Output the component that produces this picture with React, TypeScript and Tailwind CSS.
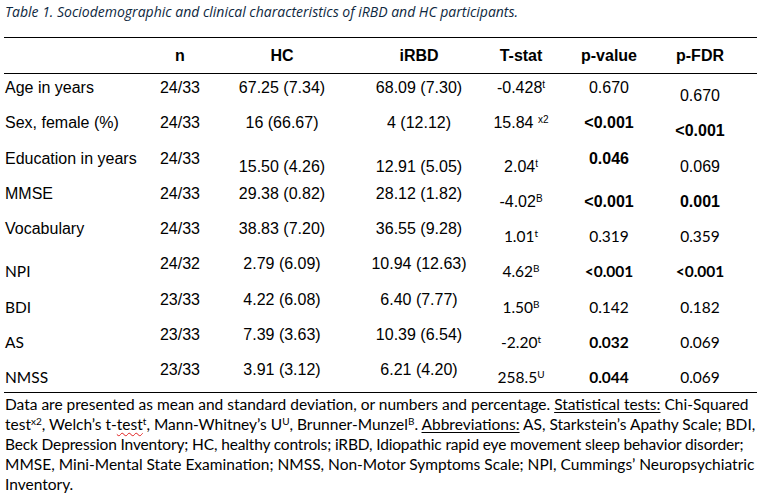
import React from 'react';

type K = 'a' | 'A' | 'c';
type Cell = { t: React.ReactNode; k: K; b?: boolean };

const S = ({ children }: { children: React.ReactNode }) => (
  <sup className="text-[10px]">{children}</sup>
);

const widths = [
  'w-[146px] text-left pl-[1px]',
  'w-[60px] text-center',
  'w-[144px] text-center',
  'w-[130px] text-center',
  'w-[74px] text-center',
  'w-[102px] text-center',
  'w-[80px] text-center',
];

const kc: Record<K, string> = {
  a: "pt-[5px] font-['Liberation_Sans',Arial,sans-serif] text-[16px] leading-[18px]",
  A: "pt-[13px] font-['Liberation_Sans',Arial,sans-serif] text-[16px] leading-[18px]",
  c: "pt-[12px] font-['Lato',sans-serif] text-[15.5px] leading-[18px]",
};

const a = (t: React.ReactNode, b = false): Cell => ({ t, k: 'a', b });
const A = (t: React.ReactNode, b = false): Cell => ({ t, k: 'A', b });
const c = (t: React.ReactNode, b = false): Cell => ({ t, k: 'c', b });

const rows: Cell[][] = [
  [a('Age in years'), a('24/33'), a('67.25 (7.34)'), a('68.09 (7.30)'), a(<>-0.428<S>t</S></>), a('0.670'), A('0.670')],
  [a('Sex, female (%)'), a('24/33'), a('16 (66.67)'), a('4 (12.12)'), a(<>15.84 <S>x2</S></>), a('<0.001', true), A('<0.001', true)],
  [a('Education in years'), a('24/33'), A('15.50 (4.26)'), A('12.91 (5.05)'), A(<>2.04<S>t</S></>), a('0.046', true), A('0.069')],
  [a('MMSE'), a('24/33'), a('29.38 (0.82)'), a('28.12 (1.82)'), A(<>-4.02<S>B</S></>), A('<0.001', true), A('0.001', true)],
  [a('Vocabulary'), a('24/33'), a('38.83 (7.20)'), a('36.55 (9.28)'), c(<>1.01<S>t</S></>), c('0.319'), c('0.359')],
  [c('NPI'), a('24/32'), a('2.79 (6.09)'), a('10.94 (12.63)'), c(<>4.62<S>B</S></>), c('<0.001', true), c('<0.001', true)],
  [c('BDI'), a('23/33'), a('4.22 (6.08)'), a('6.40 (7.77)'), c(<>1.50<S>B</S></>), c('0.142'), c('0.182')],
  [c('AS'), a('23/33'), a('7.39 (3.63)'), a('10.39 (6.54)'), c(<>-2.20<S>t</S></>), c('0.032', true), c('0.069')],
  [c('NMSS'), a('23/33'), a('3.91 (3.12)'), a('6.21 (4.20)'), c(<>258.5<S>U</S></>), c('0.044', true), c('0.069')],
];

const headers = ['', 'n', 'HC', 'iRBD', 'T-stat', 'p-value', 'p-FDR'];

export default function App() {
  return (
    <div className="w-[757px] h-[493px] bg-white text-black overflow-hidden">
      <div className="h-[37px] pl-[5px] pt-[2px] font-['Open_Sans',sans-serif] italic text-[14px] leading-[20px] text-[#0e2841]">
        Table 1. Sociodemographic and clinical characteristics of iRBD and HC participants.
      </div>
      <div className="ml-[4px] w-[753px] border-t border-b border-black">
        <div className="flex h-[36px] border-b border-black items-center font-['Liberation_Sans',Arial,sans-serif] font-bold text-[16px] leading-[18px]">
          {headers.map((h, i) => (
            <div key={i} className={widths[i]}>{h}</div>
          ))}
        </div>
        {rows.map((r, ri) => (
          <div key={ri} className="flex h-[35.3px]">
            {r.map((cell, ci) => (
              <div
                key={ci}
                className={`${widths[ci]} ${kc[cell.k]} ${cell.b ? 'font-bold' : ''} whitespace-nowrap`}
              >
                {cell.t}
              </div>
            ))}
          </div>
        ))}
      </div>
      <div className="pl-[5px] pt-[1px] font-['Lato',sans-serif] text-[15.5px] leading-[20px] whitespace-nowrap">
        <div>
          Data are presented as mean and standard deviation, or numbers and percentage.{' '}
          <span className="underline underline-offset-2">Statistical tests:</span> Chi-Squared
        </div>
        <div>
          test<S>x2</S>, Welch’s t-
          <span className="underline decoration-wavy decoration-[#e02020] decoration-1 underline-offset-2">test</span>
          <S>t</S>, Mann-Whitney’s U<S>U</S>, Brunner-Munzel<S>B</S>.{' '}
          <span className="underline underline-offset-2">Abbreviations:</span> AS, Starkstein’s Apathy Scale; BDI,
        </div>
        <div className="tracking-[-0.15px]">
          Beck Depression Inventory; HC, healthy controls; iRBD, Idiopathic rapid eye movement sleep behavior disorder;
        </div>
        <div>
          MMSE, Mini-Mental State Examination; NMSS, Non-Motor Symptoms Scale; NPI, Cummings’ Neuropsychiatric
        </div>
        <div>Inventory.</div>
      </div>
    </div>
  );
}
